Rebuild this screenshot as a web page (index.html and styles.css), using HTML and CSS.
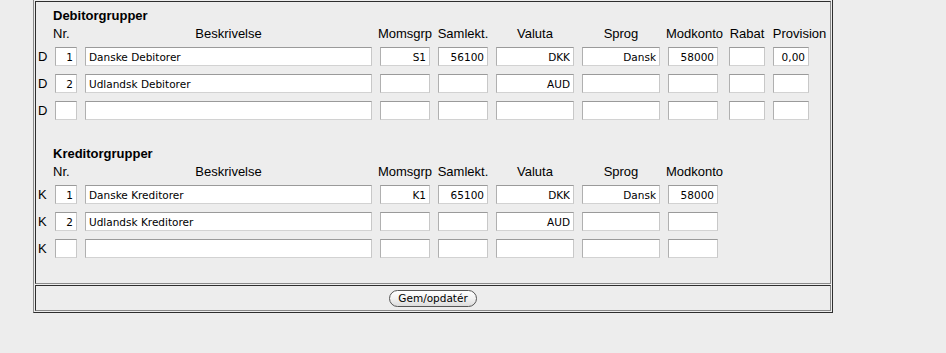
FILE: index.html
```html
<!DOCTYPE html>
<html lang="da">
<head>
  <meta charset="UTF-8">
  <title>Grupper</title>
  <link rel="stylesheet" href="styles.css">
</head>
<body>
  <table class="frame">
    <tr>
      <td class="frame-cell">
        <table class="groups">
          <colgroup>
            <col class="c-label"><col class="c-nr"><col class="c-besk"><col class="c-moms"><col class="c-saml">
            <col class="c-val"><col class="c-sprog"><col class="c-mod"><col class="c-rabat"><col class="c-prov">
          </colgroup>
          <!-- debitorgrupper -->
          <tr class="title-row"><td></td><td colspan="9" class="title">Debitorgrupper</td></tr>
          <tr class="head-row">
            <td></td><th class="left">Nr.</th><th>Beskrivelse</th><th>Momsgrp</th><th>Samlekt.</th>
            <th>Valuta</th><th>Sprog</th><th>Modkonto</th><th>Rabat</th><th>Provision</th>
          </tr>
          <tr class="data-row">
            <td class="lbl">D</td>
            <td><input class="w-nr num" value="1"></td>
            <td><input class="w-besk" value="Danske Debitorer"></td>
            <td><input class="w-50 num" value="S1"></td>
            <td><input class="w-50 num" value="56100"></td>
            <td><input class="w-78 num" value="DKK"></td>
            <td><input class="w-78 num" value="Dansk"></td>
            <td><input class="w-50 num" value="58000"></td>
            <td><input class="w-36 num" value=""></td>
            <td><input class="w-36 num" value="0,00"></td>
          </tr>
          <tr class="data-row">
            <td class="lbl">D</td>
            <td><input class="w-nr num" value="2"></td>
            <td><input class="w-besk" value="Udlandsk Debitorer"></td>
            <td><input class="w-50 num" value=""></td>
            <td><input class="w-50 num" value=""></td>
            <td><input class="w-78 num" value="AUD"></td>
            <td><input class="w-78 num" value=""></td>
            <td><input class="w-50 num" value=""></td>
            <td><input class="w-36 num" value=""></td>
            <td><input class="w-36 num" value=""></td>
          </tr>
          <tr class="data-row">
            <td class="lbl">D</td>
            <td><input class="w-nr num" value=""></td>
            <td><input class="w-besk" value=""></td>
            <td><input class="w-50 num" value=""></td>
            <td><input class="w-50 num" value=""></td>
            <td><input class="w-78 num" value=""></td>
            <td><input class="w-78 num" value=""></td>
            <td><input class="w-50 num" value=""></td>
            <td><input class="w-36 num" value=""></td>
            <td><input class="w-36 num" value=""></td>
          </tr>
          <tr class="spacer"><td colspan="10"></td></tr>
          <!-- kreditorgrupper -->
          <tr class="title-row"><td></td><td colspan="9" class="title">Kreditorgrupper</td></tr>
          <tr class="head-row">
            <td></td><th class="left">Nr.</th><th>Beskrivelse</th><th>Momsgrp</th><th>Samlekt.</th>
            <th>Valuta</th><th>Sprog</th><th>Modkonto</th><td></td><td></td>
          </tr>
          <tr class="data-row">
            <td class="lbl">K</td>
            <td><input class="w-nr num" value="1"></td>
            <td><input class="w-besk" value="Danske Kreditorer"></td>
            <td><input class="w-50 num" value="K1"></td>
            <td><input class="w-50 num" value="65100"></td>
            <td><input class="w-78 num" value="DKK"></td>
            <td><input class="w-78 num" value="Dansk"></td>
            <td><input class="w-50 num" value="58000"></td>
            <td></td><td></td>
          </tr>
          <tr class="data-row">
            <td class="lbl">K</td>
            <td><input class="w-nr num" value="2"></td>
            <td><input class="w-besk" value="Udlandsk Kreditorer"></td>
            <td><input class="w-50 num" value=""></td>
            <td><input class="w-50 num" value=""></td>
            <td><input class="w-78 num" value="AUD"></td>
            <td><input class="w-78 num" value=""></td>
            <td><input class="w-50 num" value=""></td>
            <td></td><td></td>
          </tr>
          <tr class="data-row">
            <td class="lbl">K</td>
            <td><input class="w-nr num" value=""></td>
            <td><input class="w-besk" value=""></td>
            <td><input class="w-50 num" value=""></td>
            <td><input class="w-50 num" value=""></td>
            <td><input class="w-78 num" value=""></td>
            <td><input class="w-78 num" value=""></td>
            <td><input class="w-50 num" value=""></td>
            <td></td><td></td>
          </tr>
        </table>
      </td>
    </tr>
    <tr>
      <td class="frame-cell foot">
        <button class="save">Gem/opdatér</button>
      </td>
    </tr>
  </table>
</body>
</html>
```

FILE: styles.css
```css
html,body{
  margin : 0;
  padding : 0;
  background : #ededed;
  font-family : "Liberation Sans", Arial, sans-serif;
  font-size : 13px;
  color : #000;
}

/* ydre ramme (table border=1) */
.frame{
  margin : -1px 0 0 33px;
  width : 800px;
  border-collapse : separate;
  border-spacing : 1px;
  border : 1px solid;
  border-color : #8a8a8a #2e2e2e #2e2e2e #8a8a8a;
}
.frame-cell{
  padding : 5px 0 21px 0;
  border : 1px solid;
  border-color : #2e2e2e #8a8a8a #8a8a8a #2e2e2e;
  vertical-align : top;
}
.frame-cell.foot{
  padding : 0;
  height : 24px;
  text-align : center;
  vertical-align : middle;
}

/* grupper */
.groups{
  width : 794px;
  table-layout : fixed;
  border-collapse : collapse;
}
.c-label{ width : 15px }
.c-nr{ width : 30px }
.c-besk{ width : 295px }
.c-moms{ width : 58px }
.c-saml{ width : 58px }
.c-val{ width : 86px }
.c-sprog{ width : 86px }
.c-mod{ width : 61px }
.c-rabat{ width : 44px }
.c-prov{ width : 61px }

.groups td, .groups th{
  padding : 0 4px;
  white-space : nowrap;
}
.groups th{
  font-weight : normal;
  text-align : center;
  padding : 0;
}
.groups th.left{
  text-align : left;
  padding-left : 2px;
}
.title-row{ height : 16px }
.title-row .title{
  font-weight : bold;
  padding-left : 2px;
}
.head-row{ height : 20px }
.data-row{ height : 27px }
.spacer{ height : 21px }
.groups td.lbl{
  padding : 0 0 0 2px;
}

.groups input{
  display : block;
  box-sizing : border-box;
  height : 19px;
  margin : 0;
  padding : 0 3px;
  background : #fff;
  border : 1px solid;
  border-color : #9a9a9a #c8c8c8 #d2d2d2 #b0b0b0;
  font-family : "DejaVu Sans", "Lucida Grande", sans-serif;
  font-size : 10.5px;
  color : #000;
}
.groups input.num{ text-align : right }
.w-nr{ width : 22px }
.w-besk{ width : 287px }
.w-50{ width : 50px }
.w-78{ width : 78px }
.w-36{ width : 36px }

.save{
  box-sizing : border-box;
  height : 17px;
  padding : 0 8px;
  border : 1px solid #555;
  border-radius : 9px;
  background : linear-gradient(#fff, #f2f2f2 50%, #dcdcdc);
  font-family : "DejaVu Sans", "Lucida Grande", sans-serif;
  font-size : 10.5px;
  line-height : 15px;
  color : #000;
  vertical-align : middle;
}
```
